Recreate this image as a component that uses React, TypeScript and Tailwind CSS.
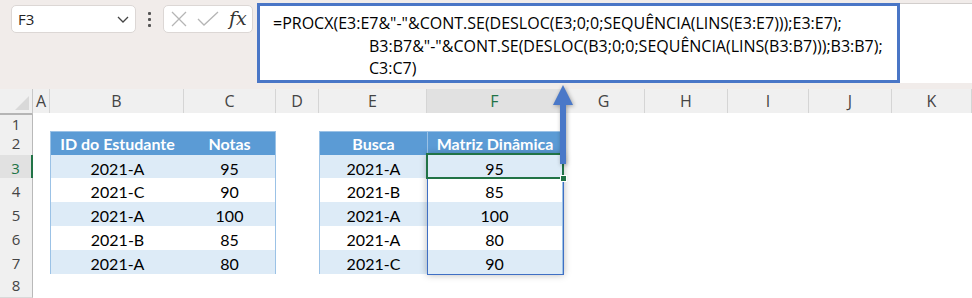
import React from "react";

const COLS =
  "grid grid-cols-[33px_17px_134px_92px_43px_108px_136px_82px_83px_81px_83px_1fr]";
const LETTERS = ["A", "B", "C", "D", "E", "F", "G", "H", "I", "J", "K"];
const ROW_H = ["h-[18px]", "h-[24px]", "h-[23px]", "h-[24px]", "h-[24px]", "h-[24px]", "h-[24px]", "h-[24px]"];

const t1 = [
  ["2021-A", "95"],
  ["2021-C", "90"],
  ["2021-A", "100"],
  ["2021-B", "85"],
  ["2021-A", "80"],
];
const t2 = [
  ["2021-A", "95"],
  ["2021-B", "85"],
  ["2021-A", "100"],
  ["2021-A", "80"],
  ["2021-C", "90"],
];

const cellFont = "font-['Lato',sans-serif] text-[16px]";

function Row({ idx }: { idx: number }) {
  const rowNum = idx + 1;
  const selected = rowNum === 3;
  const cells: React.ReactNode[] = [];
  for (let c = 0; c < 11; c++) {
    const letter = LETTERS[c];
    let node: React.ReactNode = <div key={c} className="bg-white" />;
    if (rowNum === 2) {
      if (letter === "B")
        node = (
          <div key={c} className={`bg-[#5b9bd5] border-t border-l border-[#9bc2e6] flex items-center justify-center text-white font-bold ${cellFont}`}>
            ID do Estudante
          </div>
        );
      if (letter === "C")
        node = (
          <div key={c} className={`bg-[#5b9bd5] border-t border-r border-[#9bc2e6] flex items-center justify-center text-white font-bold ${cellFont}`}>
            Notas
          </div>
        );
      if (letter === "E")
        node = (
          <div key={c} className={`bg-[#5b9bd5] border-t border-l border-[#9bc2e6] flex items-center justify-center text-white font-bold ${cellFont}`}>
            Busca
          </div>
        );
      if (letter === "F")
        node = (
          <div key={c} className={`bg-[#5b9bd5] border-t border-l border-r border-[#9bc2e6] flex items-center justify-center text-white font-bold ${cellFont}`}>
            Matriz Dinâmica
          </div>
        );
    } else if (rowNum >= 3 && rowNum <= 7) {
      const d = rowNum - 3;
      const bg = d % 2 === 0 ? "bg-[#ddebf7]" : "bg-white";
      if (letter === "B")
        node = (
          <div key={c} className={`${bg} border-l border-b border-[#9bc2e6] flex items-center justify-center pt-[2px] text-black ${cellFont}`}>
            {t1[d][0]}
          </div>
        );
      if (letter === "C")
        node = (
          <div key={c} className={`${bg} border-r border-b border-[#9bc2e6] flex items-center justify-center pt-[2px] text-black ${cellFont}`}>
            {t1[d][1]}
          </div>
        );
      if (letter === "E")
        node = (
          <div key={c} className={`${bg} border-l border-b border-[#9bc2e6] flex items-center justify-center pt-[2px] text-black ${cellFont}`}>
            {t2[d][0]}
          </div>
        );
      if (letter === "F")
        node = (
          <div key={c} className={`${bg} border-r border-b border-[#9bc2e6] flex items-center justify-center pt-[2px] text-black ${cellFont}`}>
            {t2[d][1]}
          </div>
        );
    }
    cells.push(node);
  }
  return (
    <div className={`${COLS} ${ROW_H[idx]}`}>
      <div
        className={`flex items-center justify-center font-['Open_Sans',sans-serif] text-[15px] border-b ${
          selected
            ? "bg-[#e1e1e1] text-[#217346] border-r-2 border-r-[#217346] border-b-[#d4d4d4]"
            : "bg-[#f0f0f0] text-[#444] border-r border-r-[#b9b9b9] border-b-[#d9d9d9]"
        }`}
      >
        {rowNum}
      </div>
      {cells}
    </div>
  );
}

export default function App() {
  return (
    <div className="relative w-[972px] h-[298px] overflow-hidden bg-[#f1ecea] font-['Open_Sans',sans-serif]">
      {/* Top bar */}
      <div className="flex h-[89px] items-start">
        <div className="ml-[11px] mt-[5px] w-[125px] h-[28px] bg-white border border-[#dcd7d5] rounded-[5px] flex items-center justify-between pl-[6px] pr-[5px]">
          <span className="text-[15px] text-[#222] font-['Open_Sans',sans-serif]">F3</span>
          <svg width="14" height="14" viewBox="0 0 14 14" fill="none" stroke="#444" strokeWidth="1.3">
            <path d="M2 5 L7 10 L12 5" />
          </svg>
        </div>
        <div className="w-[27px] h-[38px] flex flex-col items-center justify-center gap-[3px]">
          <span className="w-[3px] h-[3px] bg-[#555] rounded-[1px]" />
          <span className="w-[3px] h-[3px] bg-[#555] rounded-[1px]" />
          <span className="w-[3px] h-[3px] bg-[#555] rounded-[1px]" />
        </div>
        <div className="mt-[5px] w-[90px] h-[28px] bg-white border border-[#dcd7d5] rounded-[5px] flex items-center pl-[6px]">
          <svg width="18" height="18" viewBox="0 0 18 18" stroke="#b5b5b5" strokeWidth="1.3" fill="none">
            <path d="M2 2 L16 16 M16 2 L2 16" />
          </svg>
          <svg className="ml-[9px]" width="22" height="18" viewBox="0 0 22 18" stroke="#b5b5b5" strokeWidth="1.3" fill="none">
            <path d="M1 9 L7 15 L21 2" />
          </svg>
          <span className="ml-[10px] font-['DejaVu_Serif',serif] italic text-[19px] leading-none text-[#333] -mt-[2px]">
            fx
          </span>
        </div>
        <div className="ml-[4px] mt-[3px] flex-1 h-[80px] flex">
          <div className="w-[643px] h-full bg-white border-[3px] border-[#4a76c6] pl-[13px] pt-[6px] text-[16px] leading-[22.5px] text-black font-['Open_Sans',sans-serif] whitespace-nowrap">
            <div>=PROCX(E3:E7&amp;"-"&amp;CONT.SE(DESLOC(E3;0;0;SEQUÊNCIA(LINS(E3:E7)));E3:E7);</div>
            <div className="pl-[96px]">B3:B7&amp;"-"&amp;CONT.SE(DESLOC(B3;0;0;SEQUÊNCIA(LINS(B3:B7)));B3:B7);</div>
            <div className="pl-[96px]">C3:C7)</div>
          </div>
          <div className="flex-1 h-full bg-white border-t border-[#d2cecc]" />
        </div>
      </div>

      {/* Column headers */}
      <div className={`${COLS} h-[24px]`}>
        <div className="relative bg-[#f0f0f0] border-b-2 border-[#b5b5b5] border-r border-r-[#c8c8c8]">
          <svg className="absolute right-[3px] bottom-[3px]" width="14" height="14" viewBox="0 0 14 14">
            <polygon points="14,0 14,14 0,14" fill="#d9d9d9" />
          </svg>
        </div>
        {LETTERS.map((l) => (
          <div
            key={l}
            className={`flex items-center justify-center text-[16px] border-b-2 border-r border-r-[#d5d5d5] ${
              l === "F"
                ? "bg-[#e1e1e1] text-[#217346] border-b-[#217346]"
                : "bg-[#f0f0f0] text-[#444] border-b-[#b5b5b5]"
            }`}
          >
            {l}
          </div>
        ))}
      </div>

      {/* Rows */}
      {ROW_H.map((_, i) => (
        <Row key={i} idx={i} />
      ))}

      {/* Spill range border */}
      <div className="absolute left-[427px] top-[154px] w-[137px] h-[121px] border border-[#3f6fc4] shadow-[0_0_7px_rgba(0,0,0,0.28)] pointer-events-none" />
      {/* Selected cell */}
      <div className="absolute left-[426px] top-[153px] w-[138px] h-[26px] border-2 border-[#217346] pointer-events-none" />
      <div className="absolute left-[560px] top-[175px] w-[7px] h-[7px] bg-[#217346] border border-white" />

      {/* Arrow */}
      <svg
        className="absolute left-[550px] top-[83px] drop-shadow-[1px_1px_2px_rgba(0,0,0,0.35)]"
        width="26"
        height="84"
        viewBox="0 0 26 84"
      >
        <polygon points="13,2 3,22 10,22 10,81 16,81 16,22 23,22" fill="#4a78c8" />
      </svg>
    </div>
  );
}
